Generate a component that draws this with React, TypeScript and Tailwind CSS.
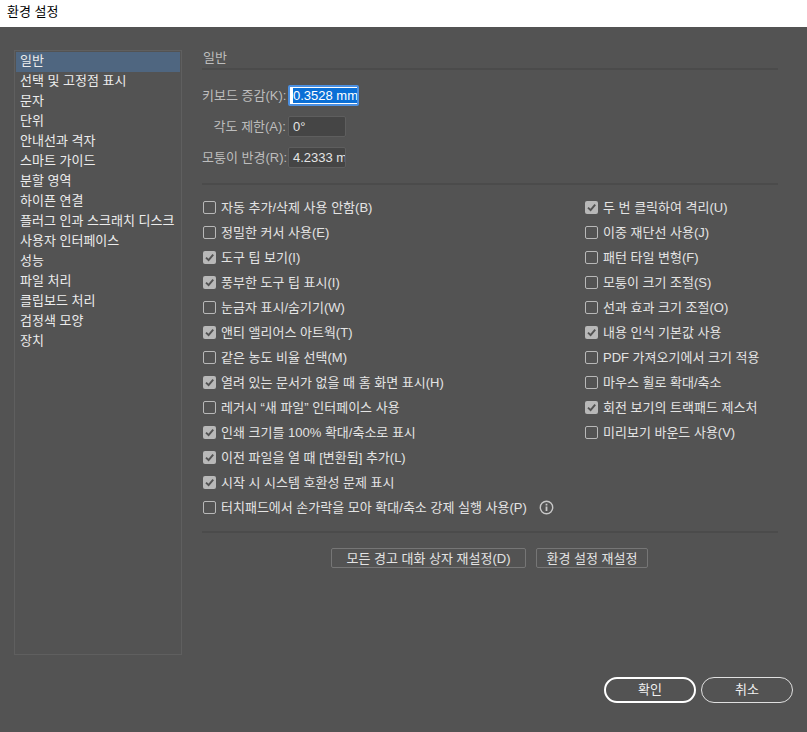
import { Fragment } from "react";

const font = "font-['Liberation_Sans','Noto_Sans_CJK_KR',sans-serif]";

const menu = ["일반", "선택 및 고정점 표시", "문자", "단위", "안내선과 격자", "스마트 가이드", "분할 영역", "하이픈 연결", "플러그 인과 스크래치 디스크", "사용자 인터페이스", "성능", "파일 처리", "클립보드 처리", "검정색 모양", "장치"];

const left: [string, boolean][] = [
	["자동 추가/삭제 사용 안함(B)", false],
	["정밀한 커서 사용(E)", false],
	["도구 팁 보기(I)", true],
	["풍부한 도구 팁 표시(I)", true],
	["눈금자 표시/숨기기(W)", false],
	["앤티 앨리어스 아트웍(T)", true],
	["같은 농도 비율 선택(M)", false],
	["열려 있는 문서가 없을 때 홈 화면 표시(H)", true],
	["레거시 “새 파일” 인터페이스 사용", false],
	["인쇄 크기를 100% 확대/축소로 표시", true],
	["이전 파일을 열 때 [변환됨] 추가(L)", true],
	["시작 시 시스템 호환성 문제 표시", true],
	["터치패드에서 손가락을 모아 확대/축소 강제 실행 사용(P)", false],
];

const right: [string, boolean][] = [
	["두 번 클릭하여 격리(U)", true],
	["이중 재단선 사용(J)", false],
	["패턴 타일 변형(F)", false],
	["모퉁이 크기 조절(S)", false],
	["선과 효과 크기 조절(O)", false],
	["내용 인식 기본값 사용", true],
	["PDF 가져오기에서 크기 적용", false],
	["마우스 휠로 확대/축소", false],
	["회전 보기의 트랙패드 제스처", true],
	["미리보기 바운드 사용(V)", false],
];

function Check(props: { label: string, checked: boolean, info?: boolean }) {
	return <div className="flex items-center h-[25px] pl-[1px]">
		{props.checked
			? <div className="w-[13px] h-[13px] rounded-[2px] bg-[#b8b8b8] flex items-center justify-center shrink-0">
				<svg width="11" height="11" viewBox="0 0 11 11"><path d="M2 5.6 L4.6 8.2 L9.2 2.6" fill="none" stroke="#535353" strokeWidth="1.9" /></svg>
			</div>
			: <div className="w-[13px] h-[13px] rounded-[2px] border border-[#b8b8b8] shrink-0"></div>}
		<div className="ml-[5px] text-[13px] text-[#e4e4e4] whitespace-nowrap">{props.label}</div>
		{props.info && <svg className="ml-3" width="15" height="15" viewBox="0 0 15 15">
			<circle cx="7.5" cy="7.5" r="6.2" fill="none" stroke="#c8c8c8" strokeWidth="1.4" />
			<rect x="6.6" y="6.5" width="1.8" height="4.5" fill="#c8c8c8" />
			<rect x="6.6" y="3.7" width="1.8" height="1.8" fill="#c8c8c8" />
		</svg>}
	</div>;
}

function Field(props: { label: string, value: string }) {
	return <Fragment>
		<div className="text-[13px] text-[#bdbdbd] text-right whitespace-nowrap">{props.label}</div>
		<div className="w-[58px] h-[21px] ml-[2px] bg-[#454545] border border-[#5e5e5e] rounded-[2px] text-[13px] text-[#e4e4e4] pl-[4px] leading-[19px] overflow-hidden whitespace-nowrap">{props.value}</div>
	</Fragment>;
}

export default function App() {
	return <div className={"w-[807px] h-[732px] flex flex-col bg-[#535353] overflow-hidden " + font}>
		<div className="h-[27px] bg-white text-black text-[13px] pl-[7px] pt-[2px] shrink-0">환경 설정</div>
		<div className="flex-1 flex pl-[14px] pt-[23px] pr-[14px]">
			<div className="w-[168px] h-[605px] border border-[#5f5f5f] p-[1px] shrink-0">
				{menu.map((item, i) => <div key={item} className={"h-5 pl-[4px] text-[13px] leading-[18px] text-[#ececec] whitespace-nowrap " + (i == 0 ? "bg-[#4f6680]" : "")}>{item}</div>)}
			</div>
			<div className="flex-1 ml-5">
				<div className="w-[576px] text-[13px] text-[#bdbdbd] h-5 leading-[16px] border-b-2 border-[#4b4b4b] pl-[1px]">일반</div>
				<div className="grid grid-cols-[84px_auto] justify-start items-center gap-y-[10px] mt-[15px]">
					<div className="text-[13px] text-[#bdbdbd] text-right whitespace-nowrap">키보드 증감(K):</div>
					<div className="w-[71px] h-[21px] ml-[2px] bg-white border-2 border-[#4b8fe0] rounded-[2px] text-[13px] leading-[17px] pl-[3px] overflow-hidden whitespace-nowrap">
						<span className="bg-[#0a6fd6] text-white border-r border-[#e8862a]">0.3528 mm</span>
					</div>
					<Field label="각도 제한(A):" value="0°" />
					<Field label="모퉁이 반경(R):" value="4.2333 mm" />
				</div>
				<div className="w-[576px] border-t-2 border-[#4b4b4b] mt-[15px]"></div>
				<div className="flex mt-[10px]">
					<div className="w-[382px] shrink-0">
						{left.map(([label, checked], i) => <Check key={label} label={label} checked={checked} info={i == 12} />)}
					</div>
					<div>
						{right.map(([label, checked]) => <Check key={label} label={label} checked={checked} />)}
					</div>
				</div>
				<div className="w-[576px] border-t-2 border-[#4b4b4b] mt-[11px]"></div>
				<div className="flex gap-[10px] mt-[15px] pl-[129px]">
					<button className="w-[195px] h-5 border border-[#767676] rounded-[2px] text-[13px] text-[#e4e4e4]">모든 경고 대화 상자 재설정(D)</button>
					<button className="w-[112px] h-5 border border-[#767676] rounded-[2px] text-[13px] text-[#e4e4e4]">환경 설정 재설정</button>
				</div>
				<div className="flex justify-end gap-[5px] mt-[109px]">
					<button className="w-[92px] h-[26px] border-2 border-white rounded-full text-[13px] text-[#f0f0f0]">확인</button>
					<button className="w-[92px] h-[26px] border border-[#e0e0e0] rounded-full text-[13px] text-[#f0f0f0]">취소</button>
				</div>
			</div>
		</div>
	</div>;
}
